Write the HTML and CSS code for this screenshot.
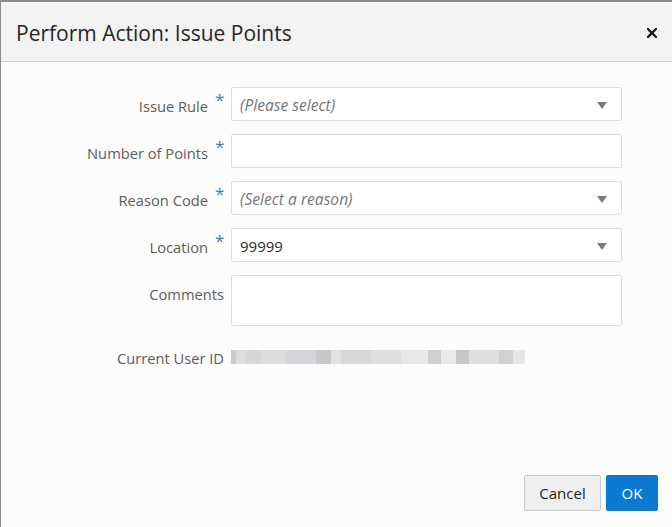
FILE: index.html
```html
<!DOCTYPE html>
<html lang="en">
<head>
    <meta charset="UTF-8">
    <title>Perform Action: Issue Points</title>
    <link rel="stylesheet" href="styles.css">
</head>
<body>
    <div class="dialog">
        <!-- Header -->
        <div class="dialog-header">
            <h1 class="dialog-title">Perform Action: Issue Points</h1>
            <button class="close-btn" aria-label="Close">
                <svg width="10" height="10" viewBox="0 0 10 10">
                    <path d="M1 1 L9 9 M9 1 L1 9" stroke="#1e1e1e" stroke-width="2.4" stroke-linecap="square"/>
                </svg>
            </button>
        </div>

        <!-- Form -->
        <div class="dialog-body">
            <div class="form-grid">
                <div class="field-label">Issue Rule<span class="req">*</span></div>
                <div class="select-box placeholder">(Please select)<span class="arrow"></span></div>

                <div class="field-label">Number of Points<span class="req">*</span></div>
                <div class="text-box"></div>

                <div class="field-label">Reason Code<span class="req">*</span></div>
                <div class="select-box placeholder">(Select a reason)<span class="arrow"></span></div>

                <div class="field-label">Location<span class="req">*</span></div>
                <div class="select-box">99999<span class="arrow"></span></div>

                <div class="field-label">Comments</div>
                <div class="text-area"></div>

                <div class="field-label readonly">Current User ID</div>
                <div class="readonly-value"><div class="blurred"></div></div>
            </div>
        </div>

        <!-- Footer buttons -->
        <div class="dialog-footer">
            <button class="btn btn-cancel">Cancel</button>
            <button class="btn btn-ok">OK</button>
        </div>
    </div>
</body>
</html>
```

FILE: styles.css
```css
html, body {
    margin: 0;
    height: 100%;
}

body {
    font-family: "Open Sans", "Noto Sans", Arial, sans-serif;
    background-color: #fcfcfc;
}

.dialog {
    box-sizing: border-box;
    height: 527px;
    border-top: 2px solid #8c8c8c;
    border-left: 1px solid #8c8c8c;
    display: flex;
    flex-direction: column;
    background-color: #fcfcfc;
}

.dialog-header {
    box-sizing: border-box;
    height: 60px;
    background-color: #f3f3f3;
    border-bottom: 1px solid #cfcfcf;
    display: flex;
    align-items: center;
    justify-content: space-between;
    padding: 2px 15px 0 15px;
}

.dialog-title {
    margin: 0;
    font-size: 21px;
    font-weight: normal;
    color: #262626;
}

.close-btn {
    border: none;
    background: none;
    padding: 0;
    width: 10px;
    height: 10px;
    display: flex;
    cursor: pointer;
}

.dialog-body {
    flex: 1;
    padding-top: 25px;
}

.form-grid {
    display: grid;
    grid-template-columns: 223px 391px;
    column-gap: 7px;
    row-gap: 13px;
    align-items: start;
}

.field-label {
    font-size: 14.7px;
    color: #5c5c5c;
    line-height: 34px;
    padding-top: 2px;
    height: 32px;
    text-align: right;
    white-space: nowrap;
}

.req {
    display: inline-block;
    width: 8px;
    margin-left: 7px;
    margin-right: 1px;
    color: #3b7fc6;
    font-size: 17px;
    line-height: 10px;
    vertical-align: 6px;
    text-align: left;
}

.select-box, .text-box, .text-area {
    box-sizing: border-box;
    height: 34px;
    border: 1px solid #dedede;
    border-radius: 2px;
    background-color: #ffffff;
    font-size: 15px;
    color: #2a2a2a;
    line-height: 34px;
    padding: 0 8px;
    position: relative;
}

.text-area {
    height: 51px;
}

.placeholder {
    font-style: italic;
    font-size: 15.6px;
    color: #767676;
}

.arrow {
    position: absolute;
    right: 14px;
    top: 14px;
    width: 0;
    height: 0;
    border-left: 5px solid transparent;
    border-right: 5px solid transparent;
    border-top: 7px solid #7a7a7a;
}

.readonly {
    margin-top: 2px;
    line-height: 30px;
    height: 28px;
}

.readonly-value {
    margin-top: 4px;
    height: 28px;
    display: flex;
    align-items: center;
}

.blurred {
    width: 294px;
    height: 14px;
    background: linear-gradient(to right,
        #cccccc 0 5px, #dddddd 5px 15px, #d6d6d6 15px 30px,
        #dcdcdc 30px 55px, #d4d4d9 55px 85px, #c8c8c8 85px 100px,
        #e1e1e1 100px 110px, #d6d8d8 110px 140px, #dedede 140px 170px,
        #e7e7e7 170px 197px, #cfcfcf 197px 210px, #e9e9e9 210px 225px,
        #c6c6c6 225px 238px, #dedede 238px 268px, #d1d1d1 268px 282px,
        #e6e6e6 282px 294px);
}

.dialog-footer {
    display: flex;
    justify-content: flex-end;
    gap: 5px;
    padding: 0 14px 16px 0;
}

.btn {
    height: 36px;
    font-family: inherit;
    font-size: 15px;
    border-radius: 2px;
    cursor: pointer;
    padding: 0;
}

.btn-cancel {
    width: 77px;
    background-color: #efefef;
    border: 1px solid #c8c8c8;
    color: #1f1f1f;
}

.btn-ok {
    width: 52px;
    background-color: #0a79cf;
    border: 1px solid #0a79cf;
    color: #ffffff;
}
```
